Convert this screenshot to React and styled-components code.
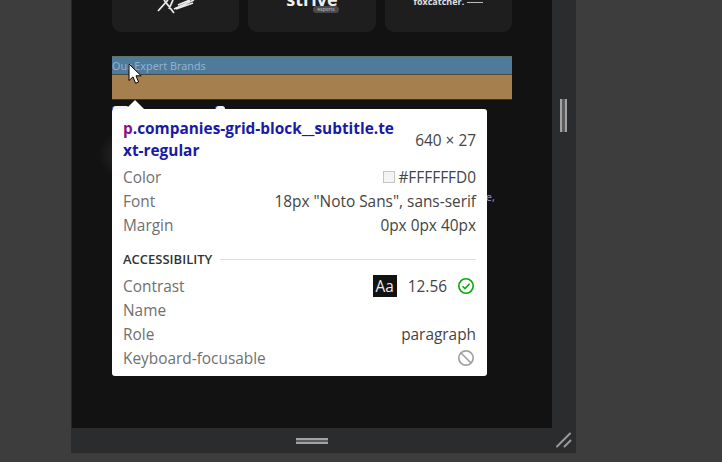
import React from "react";
import styled, { createGlobalStyle } from "styled-components";

const GlobalStyle = createGlobalStyle`
    html, body {
        margin: 0;
        padding: 0;
        width: 722px;
        height: 462px;
        overflow: hidden;
        background: #3d3d3d;
    }
`;

const rows = [
    { label: "Color", value: "#FFFFFFD0", swatch: true },
    { label: "Font", value: '18px "Noto Sans", sans-serif' },
    { label: "Margin", value: "0px 0px 40px" },
];

const CheckIcon = () => (
    <svg width="18" height="18" viewBox="0 0 18 18" fill="none">
        <circle cx="8" cy="9" r="7.2" stroke="#0ba70b" strokeWidth="1.6" />
        <path d="M4.6 9.2l2.4 2.4 4.6-4.8" stroke="#0ba70b" strokeWidth="1.6" />
    </svg>
);

const BlockIcon = () => (
    <svg width="18" height="18" viewBox="0 0 18 18" fill="none">
        <circle cx="8" cy="9" r="7.2" stroke="#a3a3a3" strokeWidth="1.7" />
        <path d="M3 4l10 10" stroke="#a3a3a3" strokeWidth="1.7" />
    </svg>
);

const Cursor = () => (
    <CursorWrap width="14" height="22" viewBox="0 0 14 22">
        <path
            d="M1 1v16.5l4-3.6 2.6 6.4 3-1.3-2.6-6.2h5.2z"
            fill="#fff"
            stroke="#000"
            strokeWidth="1"
        />
    </CursorWrap>
);

const App = () => {
    return (
        <>
            <GlobalStyle />
            <Frame>
                <Main>
                    <Viewport>
                        <LogoGrid>
                            <LogoCard>
                                <svg width="40" height="14" viewBox="0 0 40 14" fill="none">
                                    <path
                                        d="M2 11L12 0M8 0l10 13M13 9l4-9M18 9L38 0M20 9l17-6M22 5L34 0"
                                        stroke="#e8e8e8"
                                        strokeWidth="1.8"
                                    />
                                </svg>
                            </LogoCard>
                            <LogoCard>
                                <StriveName>strive</StriveName>
                                <StriveBadge>esports</StriveBadge>
                            </LogoCard>
                            <LogoCard>
                                <FoxRow>
                                    <FoxName>foxcatcher.</FoxName>
                                    <FoxDash />
                                </FoxRow>
                            </LogoCard>
                        </LogoGrid>
                        <Highlight>
                            <Subtitle>Our Expert Brands</Subtitle>
                        </Highlight>
                        <BrandPeek>
                            <PeekMark />
                            <PeekMark $small />
                        </BrandPeek>
                        <BodyText>e,</BodyText>
                        <Glow />
                        <Cursor />
                        <Tooltip>
                            <TooltipHead>
                                <Selector>
                                    <Tag>p</Tag>.companies-grid-block__subtitle.text-regular
                                </Selector>
                                <Size>640 × 27</Size>
                            </TooltipHead>
                            {rows.map((row) => (
                                <Row key={row.label}>
                                    <Label>{row.label}</Label>
                                    <Value>
                                        {row.swatch && <Swatch />}
                                        {row.value}
                                    </Value>
                                </Row>
                            ))}
                            <SectionTitle>ACCESSIBILITY</SectionTitle>
                            <Row>
                                <Label>Contrast</Label>
                                <Value>
                                    <ContrastBox>Aa</ContrastBox>
                                    <ContrastValue>12.56</ContrastValue>
                                    <CheckIcon />
                                </Value>
                            </Row>
                            <Row>
                                <Label>Name</Label>
                            </Row>
                            <Row>
                                <Label>Role</Label>
                                <Value>paragraph</Value>
                            </Row>
                            <Row>
                                <Label>Keyboard-focusable</Label>
                                <Value>
                                    <BlockIcon />
                                </Value>
                            </Row>
                        </Tooltip>
                    </Viewport>
                    <SideHandle>
                        <Grip />
                    </SideHandle>
                </Main>
                <BottomBar>
                    <BottomGrip />
                    <CornerGrip width="18" height="18" viewBox="0 0 18 18" fill="none">
                        <path d="M2 15.5L15 2.5M9.5 15.5L15.5 9.5" stroke="#9a9a9a" strokeWidth="2" strokeLinecap="round" />
                    </CornerGrip>
                </BottomBar>
            </Frame>
        </>
    );
};

const Frame = styled.div`
    width: 505px;
    height: 453px;
    margin-left: 71px;
    display: flex;
    flex-direction: column;
    background: #2b2c2e;
    font-family: "Open Sans", "Noto Sans", sans-serif;
`;

const Main = styled.div`
    flex: 1;
    display: flex;
    min-height: 0;
    border-left: 1px solid #272727;
`;

const Viewport = styled.div`
    position: relative;
    width: 480px;
    box-sizing: border-box;
    padding: 0 40px;
    background: #121212;
    overflow: hidden;
`;

const LogoGrid = styled.div`
    display: grid;
    grid-template-columns: repeat(3, 1fr);
    column-gap: 9px;
    height: 32px;
`;

const LogoCard = styled.div`
    display: flex;
    flex-direction: column;
    align-items: center;
    background: #1e1e1e;
    border-radius: 0 0 9px 9px;
    overflow: hidden;
    color: #eee;
`;

const StriveName = styled.div`
    font: 700 18px/14px "Open Sans", sans-serif;
    margin-top: -8px;
`;

const StriveBadge = styled.div`
    font: 400 5px/7px "Open Sans", sans-serif;
    background: #4a4a4a;
    color: #c8c8c8;
    padding: 0 4px;
    border-radius: 4px;
    margin-left: 28px;
`;

const FoxRow = styled.div`
    display: flex;
    align-items: flex-end;
    gap: 3px;
    margin-top: -2px;
`;

const FoxName = styled.div`
    font: 700 9px/8px "Open Sans", sans-serif;
    color: #e0e0e0;
`;

const FoxDash = styled.span`
    width: 16px;
    height: 1px;
    margin-bottom: 3px;
    background: #bdbdbd;
`;

const Highlight = styled.div`
    margin-top: 24px;
    height: 17px;
    padding-bottom: 25px;
    background: linear-gradient(#507a9c 17px, #4c4a3d 17px, #4c4a3d 18px, #a67f4f 18px);
    border-top: 1px solid #5d7268;
    border-bottom: 1px solid #3a3128;
`;

const Subtitle = styled.p`
    margin: 0;
    font: 400 10.8px/17px "Noto Sans", sans-serif;
    color: #8fb2d1;
`;

const BrandPeek = styled.div`
    display: flex;
    gap: 85px;
    height: 12px;
    padding: 6px 0 0 1px;
`;

const PeekMark = styled.div`
    width: ${(props) => (props.$small ? "9px" : "16px")};
    height: 6px;
    margin-left: ${(props) => (props.$small ? "2px" : "0")};
    background: #f2f2f2;
    border-radius: 3px 3px 0 0;
    box-shadow: -1px 0 0 #3c62c8;
`;

const BodyText = styled.p`
    margin: 71px 0 0;
    width: 383px;
    text-align: right;
    font: 400 11px/16px "Noto Sans", sans-serif;
    color: #8d8dc8;
`;

const Glow = styled.div`
    position: absolute;
    left: 26px;
    top: 130px;
    width: 50px;
    height: 50px;
    border-radius: 50%;
    background: radial-gradient(circle, rgba(255, 255, 255, 0.1), rgba(255, 255, 255, 0) 70%);
`;

const CursorWrap = styled.svg`
    position: absolute;
    left: 56px;
    top: 63px;
    z-index: 3;
`;

const Tooltip = styled.div`
    position: absolute;
    left: 40px;
    top: 109px;
    z-index: 2;
    width: 375px;
    height: 267px;
    box-sizing: border-box;
    padding: 9px 11px 0;
    background: #fff;
    border-radius: 3px;
    font-size: 15.4px;
    color: #444;
    &::before {
        content: "";
        position: absolute;
        left: 14px;
        top: -9px;
        border-left: 9px solid transparent;
        border-right: 9px solid transparent;
        border-bottom: 9px solid #fff;
    }
`;

const TooltipHead = styled.div`
    display: flex;
    justify-content: space-between;
    align-items: center;
    margin-bottom: 3px;
`;

const Selector = styled.div`
    width: 276px;
    font-weight: 700;
    line-height: 22px;
    color: #1a1aa6;
    word-break: break-all;
`;

const Tag = styled.span`
    color: #881280;
`;

const Size = styled.div`
    color: #444;
    white-space: nowrap;
`;

const Row = styled.div`
    display: flex;
    justify-content: space-between;
    align-items: center;
    height: 24px;
`;

const Label = styled.div`
    color: #707070;
`;

const Value = styled.div`
    display: flex;
    align-items: center;
    color: #444;
    white-space: nowrap;
`;

const Swatch = styled.span`
    width: 10px;
    height: 10px;
    margin-right: 3px;
    border: 1px solid #c4c4c4;
    background: #f4f4f4;
`;

const SectionTitle = styled.div`
    display: flex;
    align-items: center;
    height: 18px;
    margin: 13px 0 6px;
    font-size: 13px;
    font-weight: 600;
    color: #333;
    &::after {
        content: "";
        flex: 1;
        height: 1px;
        margin-left: 8px;
        background: #ddd;
    }
`;

const ContrastBox = styled.span`
    width: 24px;
    height: 22px;
    display: flex;
    align-items: center;
    justify-content: center;
    background: #121212;
    color: #ececec;
`;

const ContrastValue = styled.span`
    margin: 0 11px;
`;

const SideHandle = styled.div`
    flex: 1;
    padding: 99px 0 0 8px;
`;

const Grip = styled.div`
    width: 3px;
    height: 33px;
    background: #5b5b5b;
    border-left: 2px solid #a3a3a3;
    border-right: 2px solid #a3a3a3;
`;

const BottomBar = styled.div`
    position: relative;
    height: 25px;
    display: flex;
    align-items: center;
    padding-left: 225px;
`;

const BottomGrip = styled.div`
    width: 32px;
    height: 2px;
    border-top: 2px solid #a3a3a3;
    border-bottom: 2px solid #a3a3a3;
    background: #5b5b5b;
`;

const CornerGrip = styled.svg`
    position: absolute;
    right: 3px;
    bottom: 4px;
`;

export default App;
